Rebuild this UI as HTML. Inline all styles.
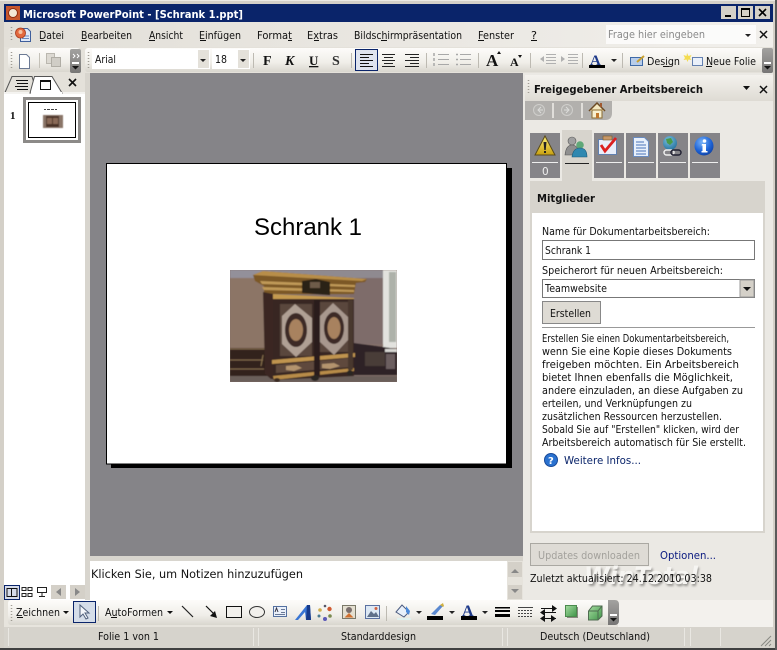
<!DOCTYPE html>
<html><head><meta charset="utf-8"><style>
html,body{margin:0;padding:0;background:#d4d0c8;overflow:hidden}
svg{display:block}
text{font-family:"DejaVu Sans","Liberation Sans",sans-serif;font-size:10.5px;fill:#111}
.b{font-weight:bold}
</style></head><body>
<svg width="777" height="650" viewBox="0 0 777 650" xmlns="http://www.w3.org/2000/svg">
<defs>
<linearGradient id="tb" x1="0" y1="0" x2="0" y2="1"><stop offset="0" stop-color="#fdfcfa"/><stop offset=".6" stop-color="#f0eee9"/><stop offset="1" stop-color="#d9d6ce"/></linearGradient>
<linearGradient id="mb" x1="0" y1="0" x2="1" y2="0"><stop offset="0" stop-color="#e2dfd8"/><stop offset="1" stop-color="#f1efeb"/></linearGradient>
<linearGradient id="hd" x1="0" y1="0" x2="0" y2="1"><stop offset="0" stop-color="#f4f2ee"/><stop offset="1" stop-color="#dedbd4"/></linearGradient>
<linearGradient id="chev" x1="0" y1="0" x2="0" y2="1"><stop offset="0" stop-color="#a3a2a0"/><stop offset="1" stop-color="#777675"/></linearGradient>
<linearGradient id="yel" x1="0" y1="0" x2="0" y2="1"><stop offset="0" stop-color="#fff27a"/><stop offset="1" stop-color="#c8a010"/></linearGradient>
<linearGradient id="grn" x1="0" y1="0" x2="1" y2="1"><stop offset="0" stop-color="#a6dca0"/><stop offset="1" stop-color="#3f9448"/></linearGradient>
<radialGradient id="inf" cx=".4" cy=".3" r=".8"><stop offset="0" stop-color="#7ab4f8"/><stop offset=".6" stop-color="#1c62d6"/><stop offset="1" stop-color="#0e3a96"/></radialGradient>
<radialGradient id="glb" cx=".4" cy=".3" r=".8"><stop offset="0" stop-color="#7cc0e0"/><stop offset="1" stop-color="#1e6c98"/></radialGradient>
<filter id="bl"><feGaussianBlur stdDeviation="1"/></filter>
<filter id="bs"><feGaussianBlur stdDeviation="0.45"/></filter>
<filter id="bt"><feGaussianBlur stdDeviation="0.25"/></filter>
</defs>
<rect width="777" height="650" fill="#d4d0c8"/>
<rect x="0" y="0" width="777" height="1" fill="#eceae4"/>
<rect x="0" y="648" width="777" height="2" fill="#404040"/>
<rect x="775" y="0" width="2" height="650" fill="#5a5a5a"/>
<!-- title -->
<rect x="4" y="4" width="769" height="18" fill="#0a246a"/>
<rect x="6" y="6" width="14" height="14" fill="#c8562c"/><circle cx="13" cy="13" r="4.500" fill="#f3e7d5" stroke="#8a2c10"/>
<text x="23" y="18" class="b" style="fill:#fff;font-size:11px" textLength="220" lengthAdjust="spacingAndGlyphs">Microsoft PowerPoint - [Schrank 1.ppt]</text>
<g><rect x="721" y="6" width="15" height="13" fill="#d4d0c8"/><rect x="725" y="15" width="6" height="2" fill="#000"/>
<rect x="738" y="6" width="15" height="13" fill="#d4d0c8"/><rect x="741.500" y="8.500" width="8" height="8" fill="none" stroke="#000"/><rect x="741" y="8" width="9" height="2" fill="#000"/>
<rect x="755" y="6" width="15" height="13" fill="#d4d0c8"/><path d="M759 9l7 7M766 9l-7 7" stroke="#000" stroke-width="1.600"/></g>
<!-- menu -->
<rect x="4" y="22" width="769" height="25" fill="url(#mb)"/>
<path d="M11.500 27v15" stroke="#a09c94" stroke-dasharray="1 2" stroke-width="1.500"/>
<path d="M20.500 28.500h7l3 3v10h-10z" fill="#dfe8f8" stroke="#3f5f9c"/><path d="M22 36h7M22 38.500h7" stroke="#6a88c0"/>
<circle cx="20.500" cy="33" r="5" fill="#e2683e" stroke="#a83a1c" stroke-width=".8"/><circle cx="20.500" cy="32" r="2" fill="#f4c0a0"/>
<text x="39" y="39" textLength="25" lengthAdjust="spacingAndGlyphs">Datei</text><rect x="40" y="40" width="6" height="1" fill="#111"/>
<text x="81" y="39" textLength="51" lengthAdjust="spacingAndGlyphs">Bearbeiten</text><rect x="81" y="40" width="6" height="1" fill="#111"/>
<text x="149" y="39" textLength="34" lengthAdjust="spacingAndGlyphs">Ansicht</text><rect x="149" y="40" width="6" height="1" fill="#111"/>
<text x="199" y="39" textLength="42" lengthAdjust="spacingAndGlyphs">Einfügen</text><rect x="200" y="40" width="6" height="1" fill="#111"/>
<text x="257" y="39" textLength="35" lengthAdjust="spacingAndGlyphs">Format</text><rect x="288" y="40" width="4" height="1" fill="#111"/>
<text x="307" y="39" textLength="31" lengthAdjust="spacingAndGlyphs">Extras</text><rect x="314" y="40" width="5" height="1" fill="#111"/>
<text x="354" y="39" textLength="108" lengthAdjust="spacingAndGlyphs">Bildschirmpräsentation</text><rect x="381" y="40" width="6" height="1" fill="#111"/>
<text x="478" y="39" textLength="36" lengthAdjust="spacingAndGlyphs">Fenster</text><rect x="478" y="40" width="6" height="1" fill="#111"/>
<text x="531" y="39" textLength="6" lengthAdjust="spacingAndGlyphs">?</text><rect x="531" y="40" width="6" height="1" fill="#111"/>
<rect x="606" y="25" width="150" height="19" fill="#fff" opacity=".75"/>
<text x="608" y="38" style="fill:#8a8a8a" textLength="97" lengthAdjust="spacingAndGlyphs">Frage hier eingeben</text>
<path d="M745 34h6l-3 3z" fill="#222"/><path d="M760 31l7 7M767 31l-7 7" stroke="#111" stroke-width="1.500"/>
<!-- standard toolbar -->
<rect x="4" y="47" width="769" height="26" fill="#e4e1da"/>
<rect x="8" y="48" width="72" height="24" rx="3" fill="url(#tb)"/>
<rect x="70" y="49" width="11" height="24" rx="2" fill="url(#chev)"/>
<path d="M11.500 52v16" stroke="#a09c94" stroke-dasharray="1 2" stroke-width="1.500"/>
<path d="M19.500 54.500h7l3 3v11h-10z" fill="#fff" stroke="#6c7a94"/>
<path d="M39.500 53v15" stroke="#c4c1b8"/>
<path d="M46.500 53.500h8v10h-8z" fill="#dcd9d2" stroke="#bab7af"/><path d="M51.500 57.500h9v9h-9z" fill="#d0cdc6" stroke="#b0ada5"/>
<path d="M73 54l2 2-2 2M77 54l2 2-2 2" stroke="#fff" fill="none"/>
<path d="M72 62h7v2h-7z" fill="#fff"/><path d="M72 66h7l-3.500 3.500z" fill="#111"/>
<rect x="85" y="48" width="688" height="24" rx="3" fill="url(#tb)"/>
<path d="M88.500 52v16" stroke="#a09c94" stroke-dasharray="1 2" stroke-width="1.500"/>
<rect x="92" y="49" width="118" height="20" fill="#fff"/><rect x="198" y="50" width="11" height="18" fill="#e4e1da"/><path d="M200 59h6l-3 3z" fill="#222"/>
<text x="95" y="63" textLength="21" lengthAdjust="spacingAndGlyphs">Arial</text>
<rect x="212" y="49" width="38" height="20" fill="#fff"/><rect x="238" y="50" width="11" height="18" fill="#e4e1da"/><path d="M240 59h6l-3 3z" fill="#222"/>
<text x="215" y="63" textLength="12" lengthAdjust="spacingAndGlyphs">18</text>
<path d="M253.500 53v15M351.500 53v15M426.500 53v15M478.500 53v15M530.500 53v15M582.500 53v15M622.500 53v15" stroke="#bdbab2"/>
<text x="263" y="65" style="font-family:'Liberation Serif',serif;font-weight:bold;font-size:14px">F</text>
<text x="285" y="65" style="font-family:'Liberation Serif',serif;font-weight:bold;font-style:italic;font-size:14px">K</text>
<text x="309" y="65" style="font-family:'Liberation Serif',serif;font-weight:bold;font-size:13px;text-decoration:underline">U</text>
<text x="332" y="65" style="font-family:'Liberation Serif',serif;font-weight:bold;font-size:14px;fill:#333">S</text>
<rect x="355.500" y="49.500" width="22" height="21" fill="#dfe4ef" stroke="#0a246a"/>
<path d="M360 54.500h13M360 57.500h9M360 60.500h13M360 63.500h9M360 66.500h13" stroke="#111"/>
<path d="M382 54.500h13M384 57.500h9M382 60.500h13M384 63.500h9M382 66.500h13" stroke="#222"/>
<path d="M405 54.500h14M410 57.500h9M405 60.500h14M410 63.500h9M405 66.500h14" stroke="#222"/>
<path d="M438 54.500h11M438 59.500h11M438 64.500h11M460 54.500h11M460 59.500h11M460 64.500h11" stroke="#a8a8a8"/>
<path d="M434 53v3M434 58v3M434 63v3M456 54.500h2M456 59.500h2M456 64.500h2" stroke="#a8a8a8" stroke-width="1.500"/>
<text x="486" y="66" style="font-family:'Liberation Serif',serif;font-weight:bold;font-size:17px">A</text><path d="M497 54l2-3 2 3z" fill="#111"/>
<text x="510" y="66" style="font-family:'Liberation Serif',serif;font-weight:bold;font-size:12px">A</text><path d="M518 55l2 3 2-3z" fill="#111"/>
<path d="M546 54.500h10M546 57.500h10M546 60.500h10M546 63.500h10M568 54.500h10M568 57.500h10M568 60.500h10M568 63.500h10" stroke="#b0b0b0"/>
<path d="M544 56l-4 3 4 3zM561 56l4 3-4 3z" fill="#b0b0b0"/>
<text x="590" y="65" style="font-family:'Liberation Serif',serif;font-weight:bold;font-size:15px;fill:#1e3a8a">A</text><rect x="589" y="65" width="16" height="3" fill="#000"/>
<path d="M611 59h6l-3 3z" fill="#222"/>
<rect x="630.500" y="57.500" width="12" height="8" fill="#b8cdea" stroke="#3f6aa8"/><path d="M637 62l7-6" stroke="#c8a030" stroke-width="2"/>
<text x="647" y="65" textLength="33" lengthAdjust="spacingAndGlyphs">Design</text><rect x="663" y="66" width="6" height="1" fill="#111"/>
<rect x="692.500" y="57.500" width="10" height="8" fill="#eaf0fa" stroke="#6480b0"/><path d="M687 53l1.500 3 3-1-1.500 3 1.500 2-3-.5-1 2.500-1-2.500-3 .5 1.500-2-1.500-3 3 1z" fill="#f4dc50"/>
<text x="706" y="65" textLength="50" lengthAdjust="spacingAndGlyphs">Neue Folie</text><rect x="706" y="66" width="6" height="1" fill="#111"/>
<rect x="762" y="48" width="11" height="25" rx="2" fill="url(#chev)"/><path d="M764 62h7v2h-7z" fill="#fff"/><path d="M764 66h7l-3.500 3.500z" fill="#111"/>
<!-- left panel -->
<rect x="4" y="73" width="81" height="527" fill="#fff"/>
<rect x="85" y="73" width="5" height="527" fill="#d8d5ce"/>
<rect x="4" y="73" width="81" height="21" fill="#e4e1da"/>
<path d="M5 92.500l7-16h20l5 16" fill="#e4e1da" stroke="#555"/>
<rect x="4" y="92" width="81" height="2" fill="#f4f3f0"/>
<path d="M30 93l4.500-16.500h17.500l10 16.500z" fill="#fff" stroke="#555"/><rect x="31" y="92" width="31" height="2" fill="#fff"/>
<path d="M16 80.500h12M17 83.500h11M15 86.500h13M17 89.500h11" stroke="#111"/>
<rect x="40.500" y="80.500" width="10" height="9" fill="#fff" stroke="#111"/><rect x="41" y="80" width="9" height="2" fill="#111"/>
<path d="M69 79l7 7M76 79l-7 7" stroke="#111" stroke-width="1.600"/>
<text x="10" y="119" style="font-family:'Liberation Serif',serif;font-weight:bold;font-size:11px">1</text>
<rect x="24.500" y="98.500" width="55" height="43" fill="#fff" stroke="#8c8a88" stroke-width="3"/>
<rect x="28.500" y="102.500" width="47" height="35" fill="#fff" stroke="#000"/>
<path d="M44 109.500h2M47 109.500h3M51 109.500h3M55 109.500h2" stroke="#444"/>
<g filter="url(#bs)"><rect x="43" y="115" width="20" height="13" fill="#8a7468"/><rect x="46" y="116" width="13" height="11" fill="#4a3228"/><rect x="47" y="118" width="5" height="6" fill="#8a6a58"/><rect x="53" y="118" width="5" height="6" fill="#8a6a58"/></g>
<!-- workspace -->
<rect x="90" y="73" width="433" height="483" fill="#858488"/>
<rect x="111" y="168" width="401" height="300" fill="#000"/>
<rect x="106.500" y="163.500" width="400" height="300.500" fill="#fff" stroke="#000"/>
<text x="254" y="235" style="font-family:'Liberation Sans',Arial,sans-serif;font-size:24px;fill:#000" textLength="108" lengthAdjust="spacingAndGlyphs">Schrank 1</text>
<!-- photo -->
<svg x="230" y="270" width="167" height="112" viewBox="0 0 167 112">
<rect width="167" height="112" fill="#84706a"/>
<g filter="url(#bs)">
<rect width="40" height="8" fill="#93909a"/>
<path d="M0 8L40 8V80H0z" fill="#8c7566"/>
<rect x="40" y="0" width="115" height="10" fill="#8f8a90"/>
<rect x="120" y="8" width="33" height="66" fill="#7e6c6a"/>
<rect x="153" y="0" width="14" height="78" fill="#e2e2de"/>
<rect x="159" y="2" width="7" height="70" fill="#aeb2aa"/>
<rect x="0" y="78" width="40" height="30" fill="#33221e"/>
<path d="M0 79h36M0 90h33M0 99h34" stroke="#7e6648" stroke-width="1.300"/>
<path d="M33 85L31 96" stroke="#8c7450"/>
<path d="M124 73l43 6v26h-43z" fill="#2f2326"/><rect x="155" y="79" width="12" height="3" fill="#d8d8d4"/><rect x="156" y="84" width="9" height="15" fill="#6c5e60"/><path d="M135 82h20v14h-20z" fill="#4a3c38"/>
<rect x="0" y="106" width="167" height="6" fill="#6a5e5a"/>
<path d="M23 5L33 1 137 9 135 12 126 13 124 24H34V16L25 11z" fill="#7c5828"/>
<path d="M23 5L33 1 137 9 132 11 40 6z" fill="#b88e48"/>
<path d="M30 11L125 15V17L32 14zM32 17L124 20V22L34 20z" fill="#c09a58"/>
<path d="M41 24L124 28V32L41 29z" fill="#c49a50"/>
<path d="M33 22L43 24V109L41 109 35 104z" fill="#3a2820"/>
<path d="M43 29H124V106L43 110z" fill="#392720"/>
<path d="M42 90L125 83V87L42 94z" fill="#c09450"/>
<path d="M43 106L124 98V101L44 110z" fill="#b88c48"/>
<path d="M46 95L120 88 121 97 46 103z" fill="#5e4a3e"/>
<path d="M56 96l10-1 6 3-8 3-8-1zM92 94l12-1 6 3-10 3-8-1z" fill="#b4946e"/>
<path d="M50 34h32v52H50zM90 32h28v50H90z" fill="#5a463e"/>
<path d="M65 34L82 48V72L66 87 52 74V46z" fill="#b0a094"/>
<path d="M103 33L118 47V70L104 85 90 72V46z" fill="#a8988e"/>
<ellipse cx="66" cy="60" rx="11" ry="17" fill="#3c2a28"/><ellipse cx="104" cy="58" rx="10" ry="16" fill="#3c2a28"/>
<ellipse cx="66" cy="60" rx="7" ry="11" fill="#a8825e"/><ellipse cx="104" cy="58" rx="6.500" ry="11" fill="#a8825e"/>
<rect x="84" y="30" width="6" height="76" fill="#2c1e1a"/><rect x="118" y="30" width="5" height="70" fill="#4a382e"/>
<path d="M72 11l14-2 14 3v13L72 23z" fill="#2c2019"/><path d="M80 12h10v6H80z" fill="#6e5c48"/>
<ellipse cx="85" cy="108" rx="4" ry="3" fill="#2a2622"/><ellipse cx="120" cy="103" rx="3" ry="3" fill="#2a2622"/><ellipse cx="47" cy="110" rx="3" ry="2" fill="#3a2c24"/>
</g></svg>
<!-- notes -->
<rect x="90" y="556" width="433" height="5" fill="#d8d5ce"/>
<rect x="90" y="561" width="417" height="39" fill="#fff"/>
<text x="91" y="578" style="font-size:11.500px" textLength="212" lengthAdjust="spacingAndGlyphs">Klicken Sie, um Notizen hinzuzufügen</text>
<rect x="507" y="561" width="16" height="39" fill="#e6e3dc"/>
<rect x="508" y="562" width="14" height="15" fill="#d4d0c8"/><path d="M511 573h8l-4-4z" fill="#888"/>
<rect x="508" y="585" width="14" height="14" fill="#d4d0c8"/><path d="M511 589h8l-4 4z" fill="#888"/>
<!-- view buttons -->
<rect x="4.500" y="585.500" width="15" height="14" fill="#d6dceb" stroke="#0a246a"/><path d="M7 588.500h10v8H7zM11.500 588v9" fill="none" stroke="#111"/>
<path d="M22 587.500h4v3h-4zM28 587.500h4v3h-4zM22 593.500h4v3h-4zM28 593.500h4v3h-4z" fill="none" stroke="#222"/>
<path d="M37.500 587.500h9v5h-9zM42 592v4M39 596.500h6" fill="none" stroke="#222"/>
<rect x="51" y="585" width="15" height="14" fill="#d4d0c8"/><path d="M61 588v8l-5-4z" fill="#888"/>
<rect x="70" y="585" width="15" height="14" fill="#d4d0c8"/><path d="M75 588v8l5-4z" fill="#888"/>
<!-- draw toolbar -->
<rect x="4" y="600" width="769" height="27" fill="#e7e4dd"/>
<rect x="8" y="600" width="610" height="25" rx="3" fill="url(#tb)"/>
<rect x="618" y="600" width="155" height="27" fill="#f3f1ed"/>
<path d="M11.500 605v16" stroke="#a09c94" stroke-dasharray="1 2" stroke-width="1.500"/>
<text x="16" y="616" textLength="44" lengthAdjust="spacingAndGlyphs">Zeichnen</text><rect x="17" y="617" width="6" height="1" fill="#111"/>
<path d="M63 611h6l-3 3z" fill="#111"/>
<rect x="73.500" y="601.500" width="22" height="21" fill="#d5dde9" stroke="#0a246a"/>
<path d="M80 605v12l3-3 3 5 2-1-3-5h4z" fill="#f4f6fa" stroke="#50607c"/>
<path d="M98.500 606v15" stroke="#bdbab2"/>
<text x="105" y="616" textLength="58" lengthAdjust="spacingAndGlyphs">AutoFormen</text><rect x="111" y="617" width="6" height="1" fill="#111"/>
<path d="M167 611h6l-3 3z" fill="#111"/>
<path d="M182 606l11 11" stroke="#222" stroke-width="1.200"/>
<path d="M206 606l9 9" stroke="#111" stroke-width="1.200"/><path d="M217 618l-7-2 5-5z" fill="#111"/>
<rect x="226.500" y="606.500" width="15" height="11" fill="#f2f0ec" stroke="#111"/>
<ellipse cx="257" cy="612" rx="7.500" ry="5.500" fill="#f2f0ec" stroke="#333"/>
<rect x="273.500" y="606.500" width="13" height="10" fill="#eaf0fa" stroke="#5470a0"/><path d="M281 609.500h4M281 612.500h4M275 614.500h10" stroke="#6a7a98"/><path d="M275 612l1.500-4 1.500 4" fill="none" stroke="#334"/>
<path d="M295 620l12-15h3l1 15h-5l-1-8-7 8z" fill="#3a76d4"/><path d="M307 605h3l1 15h-5z" fill="#173a8a"/>
<circle cx="320" cy="610" r="1.800" fill="#d0b050"/><circle cx="329.500" cy="609" r="2.200" fill="#d05a30"/><circle cx="330" cy="616" r="1.800" fill="#7a8a50"/><circle cx="325" cy="619" r="2" fill="#5a58b8"/><circle cx="319" cy="616" r="1.500" fill="#4a7a90"/><circle cx="325" cy="606" r="1.300" fill="#556"/>
<rect x="342.500" y="605.500" width="13" height="13" fill="#e4dfd0" stroke="#7a7868"/><circle cx="349" cy="610" r="3" fill="#7a6e6c"/><path d="M344.500 617.500l4.500-4.500 4.500 4.500z" fill="#d07030"/>
<rect x="365.500" y="605.500" width="14" height="13" fill="#dde8f4" stroke="#5a70a0"/><path d="M367 617l4-6 3 3 2-2 3 5z" fill="#60708a"/><circle cx="376" cy="608.500" r="1.500" fill="#d06040"/>
<path d="M386.500 606v15" stroke="#bdbab2"/>
<path d="M396 612l6-7 7 7-5 5z" fill="#e8f0fa" stroke="#4c5c80"/><path d="M406 606l4 5-1 4-3-3z" fill="#4a88d8"/><rect x="397" y="618" width="14" height="2" fill="#e0f0ee"/>
<path d="M416 611h6l-3 3z" fill="#222"/>
<rect x="427" y="616" width="16" height="4" fill="#000"/><path d="M431 614l9-9 3 1-8 9z" fill="#5a88d0"/><path d="M440 605l3-2 1 3-1 1z" fill="#d0b040"/>
<path d="M449 611h6l-3 3z" fill="#222"/>
<text x="462" y="616" style="font-family:'Liberation Serif',serif;font-weight:bold;font-size:16px;fill:#1e3a8a">A</text><rect x="461" y="616" width="16" height="4" fill="#000"/>
<path d="M482 611h6l-3 3z" fill="#222"/>
<rect x="495" y="607" width="15" height="1.500" fill="#000"/><rect x="495" y="610" width="15" height="2" fill="#000"/><rect x="495" y="614" width="15" height="3" fill="#000"/>
<path d="M518 607.500h15" stroke="#444"/><path d="M518 610.500h15M518 613.500h15M518 616.500h15" stroke="#444" stroke-dasharray="2 1"/>
<path d="M541 608.500h13M544 612.500h12M541 618.500h15" stroke="#111"/><path d="M552 605l5 3.500-5 3.500zM545 609l-5 3.500 5 3.500zM545 615l-5 3.500 5 3.500zM551 615l5 3.500-5 3.500z" fill="#111"/>
<rect x="567" y="607" width="11" height="11" fill="#8a8880" filter="url(#bt)"/><rect x="565.500" y="605.500" width="11" height="11" fill="url(#grn)" stroke="#4a8a4c"/>
<path d="M588.500 611l4-5h9.500v10l-4 4h-9.500z" fill="url(#grn)" stroke="#4f6c50"/><path d="M588.500 611h9.500v9M598 611l4-5" fill="none" stroke="#4f6c50"/>
<path d="M608 600h7a4 4 0 0 1 4 4v17a4 4 0 0 1-4 4h-7z" fill="url(#chev)"/><path d="M610 614h7v2h-7z" fill="#fff"/><path d="M610 618h7l-3.500 3.500z" fill="#111"/>
<!-- status -->
<rect x="4" y="627" width="769" height="21" fill="#d6d3cc"/>
<path d="M8.500 628v18M253.500 628v18M258.500 628v18M502.500 628v18M507.500 628v18M684.500 628v18M690.500 628v18M720.500 628v18" stroke="#e9e7e2"/>
<text x="98" y="640" textLength="61" lengthAdjust="spacingAndGlyphs">Folie 1 von 1</text>
<text x="341" y="640" textLength="75" lengthAdjust="spacingAndGlyphs">Standarddesign</text>
<text x="540" y="640" textLength="110" lengthAdjust="spacingAndGlyphs">Deutsch (Deutschland)</text>
<path d="M761 646l10-10M765 646l6-6M769 646l2-2" stroke="#8a8a84"/>
<!-- task pane -->
<rect x="523" y="73" width="250" height="527" fill="#ebe9e4"/>
<rect x="525" y="75" width="248" height="26" fill="url(#hd)"/>
<path d="M528.500 80v14" stroke="#a09c94" stroke-dasharray="1 2" stroke-width="1.500"/>
<text x="534" y="93" class="b" style="font-size:11px" textLength="169" lengthAdjust="spacingAndGlyphs">Freigegebener Arbeitsbereich</text>
<path d="M743 86h7l-3.500 4z" fill="#111"/><path d="M760 86l7 7M767 86l-7 7" stroke="#111" stroke-width="1.500"/>
<path d="M525 101h87v12q0 7-7 7h-80z" fill="#b2b0ad"/>
<circle cx="539" cy="110" r="5.500" fill="#b4b3b0" stroke="#cfcecb"/><circle cx="567" cy="110" r="5.500" fill="#b4b3b0" stroke="#cfcecb"/>
<path d="M541 107l-3 3 3 3M538 110h5M566 107l3 3-3 3M569 110h-5" stroke="#dcdcda" fill="none"/>
<path d="M553 103v15M582 103v15" stroke="#f0eeea" stroke-width="1.500"/>
<path d="M589 111l8-8 8 8" fill="#f4e8c0" stroke="#6c4a24" stroke-width="1.500"/><rect x="592" y="110" width="10" height="8" fill="#f8f0d0" stroke="#8a6a30"/><rect x="596" y="113" width="3" height="5" fill="#c0772c"/><rect x="600" y="103" width="2" height="4" fill="#a05a30"/>
<!-- tabs -->
<rect x="530" y="133" width="30" height="45" fill="#858488"/>
<rect x="562" y="130" width="30" height="51" fill="#d7d4cd"/>
<rect x="594" y="133" width="30" height="45" fill="#858488"/>
<rect x="626" y="133" width="30" height="45" fill="#858488"/>
<rect x="658" y="133" width="30" height="45" fill="#858488"/>
<rect x="690" y="133" width="30" height="45" fill="#858488"/>
<path d="M532 162.500h26M596 162.500h26M628 162.500h26M660 162.500h26M692 162.500h26" stroke="#eee"/>
<path d="M565 163.500h24" stroke="#222"/>
<path d="M545 136l10 19h-20z" fill="url(#yel)" stroke="#5a4a18"/><path d="M543.500 142h3l-.8 8h-1.400z" fill="#222"/><rect x="544" y="151" width="2" height="2" fill="#222"/>
<text x="542" y="175" style="fill:#eee">0</text>
<circle cx="572" cy="141" r="4" fill="#a0a0a0" stroke="#555" stroke-width=".6"/><path d="M565 155q1-10 7-10t8 10z" fill="#8f8f8f" stroke="#555" stroke-width=".6"/>
<circle cx="580" cy="145" r="3.800" fill="#5fa878"/><path d="M572 157q1-9 8-9t7 9z" fill="#2f88b0" stroke="#1c5a78" stroke-width=".6"/>
<rect x="598.500" y="139.500" width="18" height="15" fill="#e8eefa" stroke="#6080b0"/><rect x="603" y="136" width="9" height="4" fill="#c89868" stroke="#7a5a30" stroke-width=".6"/><path d="M601 145l4 6 11-13" stroke="#dc2020" fill="none" stroke-width="2.800"/>
<path d="M633.500 137.500h11l4 4v15h-15z" fill="#e8f0fb" stroke="#6a8cc0"/><path d="M636 142h8M636 145h10M636 148h10M636 151h10M636 154h10" stroke="#4a74b8"/>
<circle cx="670" cy="143" r="7" fill="url(#glb)"/><path d="M666 139l5-1 2 4-3 3-3-2z" fill="#4a9a4a"/><rect x="664" y="150" width="10" height="5" rx="2.500" fill="none" stroke="#eee" stroke-width="1.500"/><rect x="671" y="150" width="10" height="5" rx="2.500" fill="none" stroke="#223" stroke-width="1.500"/>
<circle cx="704" cy="146" r="9.500" fill="url(#inf)"/><circle cx="704.500" cy="141" r="1.800" fill="#fff"/><path d="M702 144h4v7h1.500v1.500h-6V151h1v-5.500h-1z" fill="#fff"/>
<!-- body -->
<rect x="530" y="181" width="235" height="32" fill="#d7d4cd"/>
<text x="537" y="202" class="b" textLength="58" lengthAdjust="spacingAndGlyphs">Mitglieder</text>
<rect x="530" y="213" width="235" height="320" fill="#d7d4cd"/>
<rect x="532" y="213" width="231" height="318" fill="#fff"/>
<text x="542" y="235" textLength="168" lengthAdjust="spacingAndGlyphs">Name für Dokumentarbeitsbereich:</text>
<rect x="542.500" y="240.500" width="212" height="19" fill="#fff" stroke="#777"/>
<text x="545" y="254" textLength="46" lengthAdjust="spacingAndGlyphs">Schrank 1</text>
<text x="542" y="274" textLength="181" lengthAdjust="spacingAndGlyphs">Speicherort für neuen Arbeitsbereich:</text>
<rect x="542.500" y="279.500" width="212" height="18" fill="#fff" stroke="#777"/>
<rect x="740" y="280" width="14" height="17" fill="#d4d0c8" stroke="#999"/><path d="M743 287h8l-4 4z" fill="#111"/>
<text x="545" y="292" textLength="62" lengthAdjust="spacingAndGlyphs">Teamwebsite</text>
<rect x="542.500" y="301.500" width="58" height="22" fill="#dedbd4" stroke="#888"/>
<text x="550" y="317" textLength="41" lengthAdjust="spacingAndGlyphs">Erstellen</text>
<rect x="542" y="327" width="213" height="1" fill="#999"/>
<text x="542" y="342" textLength="187" lengthAdjust="spacingAndGlyphs">Erstellen Sie einen Dokumentarbeitsbereich,</text>
<text x="542" y="355" textLength="190" lengthAdjust="spacingAndGlyphs">wenn Sie eine Kopie dieses Dokuments</text>
<text x="542" y="368" textLength="197" lengthAdjust="spacingAndGlyphs">freigeben möchten. Ein Arbeitsbereich</text>
<text x="542" y="381" textLength="191" lengthAdjust="spacingAndGlyphs">bietet Ihnen ebenfalls die Möglichkeit,</text>
<text x="542" y="394" textLength="201" lengthAdjust="spacingAndGlyphs">andere einzuladen, an diese Aufgaben zu</text>
<text x="542" y="407" textLength="150" lengthAdjust="spacingAndGlyphs">erteilen, und Verknüpfungen zu</text>
<text x="542" y="420" textLength="180" lengthAdjust="spacingAndGlyphs">zusätzlichen Ressourcen herzustellen.</text>
<text x="542" y="433" textLength="197" lengthAdjust="spacingAndGlyphs">Sobald Sie auf "Erstellen" klicken, wird der</text>
<text x="542" y="446" textLength="204" lengthAdjust="spacingAndGlyphs">Arbeitsbereich automatisch für Sie erstellt.</text>
<circle cx="551" cy="460" r="6.500" fill="#2a72d0" stroke="#1a4a98"/><text x="548" y="464" class="b" style="fill:#fff;font-size:10px">?</text>
<text x="564" y="464" style="fill:#0a246a" textLength="77" lengthAdjust="spacingAndGlyphs">Weitere Infos...</text>
<rect x="530.500" y="543.500" width="118" height="22" fill="#dedbd5" stroke="#aaa8a2"/>
<text x="538" y="559" style="fill:#a3a19c" textLength="102" lengthAdjust="spacingAndGlyphs">Updates downloaden</text>
<text x="660" y="559" style="fill:#0a1a80" textLength="56" lengthAdjust="spacingAndGlyphs">Optionen...</text>
<text x="586" y="586" class="b" style="font-style:italic;font-size:24px;fill:#9a9894" filter="url(#bl)" textLength="113" lengthAdjust="spacingAndGlyphs">WinTotal</text>
<text x="584" y="584" class="b" style="font-style:italic;font-size:24px;fill:#f6f5f2" textLength="114" lengthAdjust="spacingAndGlyphs">WinTotal</text>
<text x="530" y="582" textLength="182" lengthAdjust="spacingAndGlyphs">Zuletzt aktualisiert: 24.12.2010 03:38</text>
</svg>
</body></html>
